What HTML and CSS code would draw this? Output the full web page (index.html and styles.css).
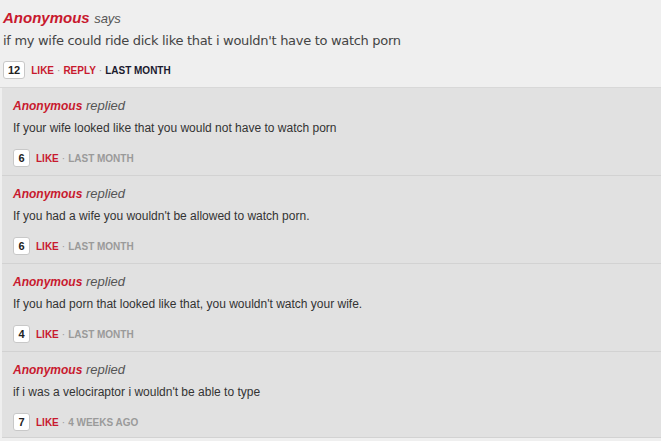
FILE: index.html
```html
<!DOCTYPE html>
<html>
<head>
<meta charset="utf-8">
<link rel="stylesheet" href="styles.css">
</head>
<body>
<div class="comment">
  <div class="head"><span class="name">Anonymous</span> <span class="says">says</span></div>
  <div class="text">if my wife could ride dick like that i wouldn't have to watch porn</div>
  <div class="meta"><span class="count wide">12</span><span class="act">LIKE</span><span class="dot">·</span><span class="act">REPLY</span><span class="dot">·</span><span class="time dark">LAST MONTH</span></div>
</div>
<div class="replies">
  <div class="reply">
    <div class="rhead"><span class="name">Anonymous</span> <span class="says">replied</span></div>
    <div class="rtext">If your wife looked like that you would not have to watch porn</div>
    <div class="meta"><span class="count">6</span><span class="act">LIKE</span><span class="dot">·</span><span class="time">LAST MONTH</span></div>
  </div>
  <div class="reply">
    <div class="rhead"><span class="name">Anonymous</span> <span class="says">replied</span></div>
    <div class="rtext">If you had a wife you wouldn't be allowed to watch porn.</div>
    <div class="meta"><span class="count">6</span><span class="act">LIKE</span><span class="dot">·</span><span class="time">LAST MONTH</span></div>
  </div>
  <div class="reply">
    <div class="rhead"><span class="name">Anonymous</span> <span class="says">replied</span></div>
    <div class="rtext">If you had porn that looked like that, you wouldn't watch your wife.</div>
    <div class="meta"><span class="count">4</span><span class="act">LIKE</span><span class="dot">·</span><span class="time">LAST MONTH</span></div>
  </div>
  <div class="reply last">
    <div class="rhead"><span class="name">Anonymous</span> <span class="says">replied</span></div>
    <div class="rtext">if i was a velociraptor i wouldn't be able to type</div>
    <div class="meta"><span class="count">7</span><span class="act">LIKE</span><span class="dot">·</span><span class="time">4 WEEKS AGO</span></div>
  </div>
</div>
</body>
</html>
```
FILE: styles.css
```css
html, body {
  margin: 0;
  padding: 0;
  background: #efefef;
  font-family: "Liberation Sans", Arial, sans-serif;
  color: #333;
}
.comment {
  padding: 8px 0 8px 3px;
  border-bottom: 1px solid #d8d8d8;
}
.head {
  line-height: 20px;
}
.head .name {
  font-size: 15px;
}
.name {
  color: #c8192e;
  font-weight: bold;
  font-style: italic;
}
.says {
  color: #555;
  font-style: italic;
}
.head .says {
  font-size: 13px;
}
.text {
  margin-top: 2px;
  font-family: "DejaVu Sans", Verdana, sans-serif;
  font-size: 13px;
  letter-spacing: -0.3px;
  line-height: 20px;
  color: #444;
}
.meta {
  display: flex;
  align-items: center;
  margin-top: 10px;
  font-size: 10px;
  font-weight: bold;
  height: 18px;
}
.count {
  box-sizing: border-box;
  height: 18px;
  min-width: 17px;
  padding: 0 4px;
  display: flex;
  align-items: center;
  justify-content: center;
  background: #fff;
  border: 1px solid #c8c8c8;
  border-radius: 3px;
  color: #222;
  font-size: 11px;
  margin-right: 6px;
}
.count.wide {
  min-width: 22px;
}
.act {
  color: #c8192e;
}
.dot {
  color: #999;
  font-weight: normal;
  margin: 0 3px;
}
.time {
  color: #9a9a9a;
}
.time.dark {
  color: #1a1a2e;
}
.replies {
  margin-left: 2px;
  background: #e1e1e1;
}
.reply {
  padding: 9px 10px 8px 11px;
  border-bottom: 1px solid #d2d2d2;
}
.reply.last {
  padding-bottom: 6px;
}
.rhead {
  line-height: 18px;
  font-size: 13px;
}
.rhead .name {
  font-size: 12px;
}
.rtext {
  margin-top: 4px;
  font-size: 12px;
  line-height: 18px;
  color: #333;
}
.reply .meta {
  margin-top: 12px;
}
```
